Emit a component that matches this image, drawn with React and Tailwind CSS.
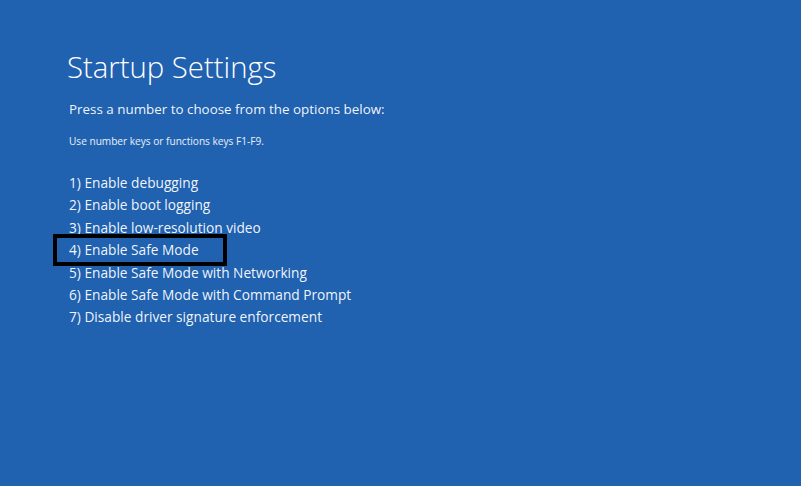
import React from "react";

const options = [
  "1) Enable debugging",
  "2) Enable boot logging",
  "3) Enable low-resolution video",
  "4) Enable Safe Mode",
  "5) Enable Safe Mode with Networking",
  "6) Enable Safe Mode with Command Prompt",
  "7) Disable driver signature enforcement",
];

export default function App() {
  return (
    <div
      className="w-[801px] h-[486px] bg-[#2162b0] text-white overflow-hidden"
      style={{ fontFamily: '"Open Sans", "Noto Sans", sans-serif' }}
    >
      <div className="pl-[67px] pt-[48px]">
        <h1 className="text-[29.3px] leading-[38px] font-light">Startup Settings</h1>
        <p className="mt-[13px] pl-[2px] text-[13.4px] leading-[20px] text-white/95">
          Press a number to choose from the options below:
        </p>
        <p className="mt-[15px] pl-[2px] text-[10.1px] leading-[14px] text-white/90">
          Use number keys or functions keys F1-F9.
        </p>
        <ul className="mt-[24px] pl-[2px] text-[13.7px] leading-[22.4px] text-white/95">
          {options.map((o, i) => (
            <li key={o} className="relative">
              {o}
              {i === 3 && (
                <span className="absolute left-[-16px] top-[-5px] w-[174px] h-[32px] border-4 border-black" />
              )}
            </li>
          ))}
        </ul>
      </div>
    </div>
  );
}
